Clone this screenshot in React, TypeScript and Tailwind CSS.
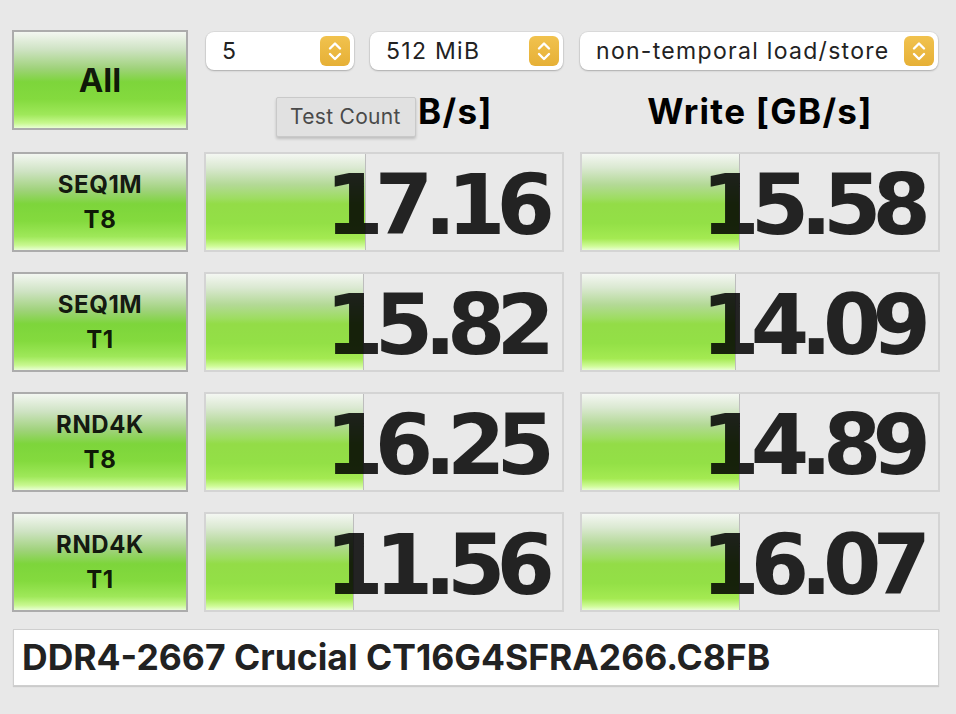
import React from 'react';

type Row = {
  label: [string, string];
  read: string;
  write: string;
  readBar: number;
  writeBar: number;
};

const rows: Row[] = [
  { label: ['SEQ1M', 'T8'], read: '17.16', write: '15.58', readBar: 160, writeBar: 158 },
  { label: ['SEQ1M', 'T1'], read: '15.82', write: '14.09', readBar: 158, writeBar: 154 },
  { label: ['RND4K', 'T8'], read: '16.25', write: '14.89', readBar: 158, writeBar: 158 },
  { label: ['RND4K', 'T1'], read: '11.56', write: '16.07', readBar: 148, writeBar: 158 },
];

const uiFont = "font-['Inter','Liberation_Sans',sans-serif]";
const greenBtn =
  'bg-[linear-gradient(to_bottom,#f3f7f1_0%,#cfe3c4_18%,#9fd27a_38%,#7dd53b_52%,#84da3e_70%,#9fe85a_86%,#c8f890_95%,#e8ffd4_100%)]';
const greenBar =
  'bg-[linear-gradient(to_bottom,#f4f7f2_0%,#dbe9d2_14%,#b3d996_32%,#9edd62_46%,#93dc47_52%,#93e046_72%,#a4ea52_88%,#cffb98_96%,#e8ffd2_100%)]';

function Stepper() {
  return (
    <svg width="30" height="30" viewBox="0 0 30 30" className="shrink-0">
      <defs>
        <linearGradient id="yel" x1="0" y1="0" x2="0" y2="1">
          <stop offset="0" stopColor="#f1c24e" />
          <stop offset="1" stopColor="#e6b036" />
        </linearGradient>
      </defs>
      <rect x="0" y="0" width="30" height="30" rx="6" fill="url(#yel)" />
      <path d="M10 12.5 L15 7.5 L20 12.5" fill="none" stroke="#fff" strokeWidth="2.4" strokeLinecap="round" strokeLinejoin="round" />
      <path d="M10 18 L15 23 L20 18" fill="none" stroke="#fff" strokeWidth="2.4" strokeLinecap="round" strokeLinejoin="round" />
    </svg>
  );
}

function Popup({ value, className }: { value: string; className: string }) {
  return (
    <div
      className={`${className} h-[38px] flex items-center justify-between pl-[16px] pr-[4px] bg-white rounded-[8px] shadow-[0_0_0_1px_rgba(0,0,0,0.05),0_1px_2px_rgba(0,0,0,0.22)] ${uiFont} text-[23px] tracking-[1.3px] text-[#222]`}
    >
      <span className="leading-none">{value}</span>
      <Stepper />
    </div>
  );
}

function TestButton({ children }: { children: React.ReactNode }) {
  return (
    <div
      className={`h-[100px] flex flex-col items-center justify-center border-2 border-[#acacac] ${greenBtn} ${uiFont} font-bold text-black/90`}
    >
      {children}
    </div>
  );
}

function ValueBox({ value, bar }: { value: string; bar: number }) {
  return (
    <div className="relative h-[100px] border-2 border-[#d4d4d4] bg-[#e9e9e9] flex items-end justify-end pr-[16px] pb-[3px]">
      <div
        className={`absolute left-0 top-0 bottom-0 ${greenBar} border-r border-[#bdbdbd]`}
        style={{ width: bar }}
      />
      <span className="relative font-['DejaVu_Sans','Verdana',sans-serif] font-bold text-[84px] leading-[84px] tracking-[-9px] text-black/85">
        {value}
      </span>
    </div>
  );
}

export default function App() {
  return (
    <div className="w-[956px] h-[714px] bg-[#e8e8e8] overflow-hidden pt-[30px] pl-[12px] pr-[16px]">
      <div className="grid grid-cols-[176px_360px_360px] gap-x-[16px] gap-y-[20px]">
        <TestButton>
          <span className="text-[33px] leading-none">All</span>
        </TestButton>

        <div className="relative flex flex-col">
          <div className="flex gap-[16px] pt-[2px] pl-[2px]">
            <Popup value="5" className="w-[148px]" />
            <Popup value="512 MiB" className="w-[193px]" />
          </div>
          <div className={`mt-[20px] text-center ${uiFont} font-bold text-[35px] tracking-[1.3px] leading-[42px] text-black`}>
            Read [GB/s]
          </div>
          <div className={`absolute left-[72px] top-[67px] w-[140px] h-[40px] flex items-center pl-[13px] bg-[#e1e1e1] border border-[#c9c9c9] rounded-[2px] shadow-[0_2px_3px_rgba(0,0,0,0.18)] ${uiFont} text-[21px] tracking-[0.3px] text-[#4a4a4a]`}>
            Test Count
          </div>
        </div>

        <div className="flex flex-col">
          <div className="flex pt-[2px]">
            <Popup value="non-temporal load/store" className="w-[358px]" />
          </div>
          <div className={`mt-[20px] text-center ${uiFont} font-bold text-[35px] tracking-[1.3px] leading-[42px] text-black`}>
            Write [GB/s]
          </div>
        </div>

        {rows.map((r) => (
          <React.Fragment key={r.label.join('-')}>
            <TestButton>
              <span className="text-[24px] tracking-[0.6px] leading-[35px]">{r.label[0]}</span>
              <span className="text-[24px] tracking-[0.6px] leading-[35px]">{r.label[1]}</span>
            </TestButton>
            <ValueBox value={r.read} bar={r.readBar} />
            <ValueBox value={r.write} bar={r.writeBar} />
          </React.Fragment>
        ))}
      </div>

      <div className="mt-[17px] ml-[1px] w-[926px] h-[57px] bg-white border border-[#cfcfcf] shadow-[0_1px_1px_rgba(0,0,0,0.12)] flex items-center pl-[8px]">
        <span className={`${uiFont} font-bold text-[35.5px] leading-none text-[#222]`}>
          DDR4-2667 Crucial CT16G4SFRA266.C8FB
        </span>
      </div>
    </div>
  );
}
